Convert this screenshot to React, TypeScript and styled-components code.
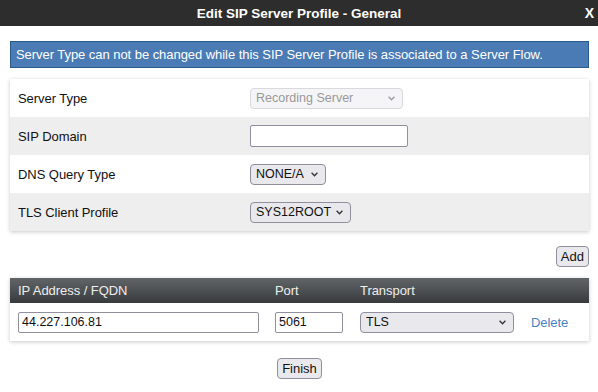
import styled, { createGlobalStyle } from "styled-components";

const GlobalStyle = createGlobalStyle`
  html, body {
    margin: 0;
    padding: 0;
    background: #ffffff;
    font-family: "Liberation Sans", Arial, sans-serif;
    font-size: 13px;
    color: #111;
  }
`;

const Dialog = styled.div`
  width: 598px;
  height: 392px;
  display: flex;
  flex-direction: column;
`;

const TitleBar = styled.div`
  height: 26px;
  background: #2d2d2d;
  display: grid;
  grid-template-columns: 1fr auto 1fr;
  align-items: center;
  color: #ffffff;
  font-weight: bold;
  font-size: 13.5px;
`;

const Title = styled.div`
  grid-column: 2;
`;

const Close = styled.div`
  justify-self: end;
  padding-right: 4px;
  font-size: 14px;
`;

const Body = styled.div`
  padding: 0 9px 0 10px;
  display: flex;
  flex-direction: column;
  letter-spacing: -0.05px;
`;

const Banner = styled.div`
  margin-top: 15px;
  height: 27px;
  box-sizing: border-box;
  border: 1px solid #2c5a8a;
  background: #4a7bb4;
  color: #ffffff;
  display: flex;
  align-items: center;
  padding-left: 5px;
`;

const Card = styled.div<{ $top: number }>`
  margin-top: ${({ $top }) => $top}px;
  background: #ffffff;
  box-shadow: 0 1px 4px rgba(0, 0, 0, 0.22);
`;

const FormRow = styled.div<{ $shade?: boolean }>`
  height: 38px;
  display: grid;
  grid-template-columns: 240px 1fr;
  align-items: center;
  background: ${({ $shade }) => ($shade ? "#eeeeee" : "#ffffff")};
`;

const Label = styled.div`
  padding-left: 8px;
`;

const SelectWrap = styled.span<{ $w: number }>`
  position: relative;
  display: inline-flex;
  width: ${({ $w }) => $w}px;
  height: 21px;
  vertical-align: middle;
`;

const Select = styled.select`
  appearance: none;
  width: 100%;
  height: 100%;
  box-sizing: border-box;
  margin: 0;
  padding: 0 10px 0 5px;
  border: 1px solid #8f8f9d;
  border-radius: 4px;
  background: #e9e9ed;
  font-family: "Liberation Sans", Arial, sans-serif;
  font-size: 12.5px;
  color: #111;
  &:disabled {
    color: #6d6d6d;
    background: #f2f2f4;
    border-color: #c8c8cf;
  }
`;

const Chevron = styled.svg<{ $muted?: boolean }>`
  position: absolute;
  right: 8px;
  top: 8px;
  width: 7px;
  height: 5px;
  pointer-events: none;
  stroke: ${({ $muted }) => ($muted ? "#9a9aa2" : "#333")};
  fill: none;
  stroke-width: 1.3;
`;

const TextInput = styled.input<{ $w: number; $h?: number }>`
  width: ${({ $w }) => $w}px;
  height: ${({ $h }) => $h ?? 22}px;
  box-sizing: border-box;
  margin: 0;
  border: 1px solid #8f8f9d;
  border-radius: 2px;
  font-family: "Liberation Sans", Arial, sans-serif;
  font-size: 12.5px;
  color: #111;
  padding: 1px 3px;
  vertical-align: middle;
`;

const ButtonRow = styled.div<{ $align: string; $top: number }>`
  display: flex;
  justify-content: ${({ $align }) => $align};
  margin-top: ${({ $top }) => $top}px;
`;

const Button = styled.button`
  height: 21px;
  padding: 0 4px;
  border: 1px solid #8f8f9d;
  border-radius: 4px;
  background: #e9e9ed;
  font-family: "Liberation Sans", Arial, sans-serif;
  font-size: 13px;
  color: #111;
`;

const Columns = styled.div`
  display: grid;
  grid-template-columns: 257px 85px 171px 1fr;
  align-items: center;
  padding-left: 8px;
`;

const HeaderRow = styled(Columns)`
  height: 25px;
  background: linear-gradient(#616568, #383b3e);
  color: #eeeeee;
`;

const DataRow = styled(Columns)`
  height: 38px;
`;

const DeleteLink = styled.a`
  color: #4a82c4;
  text-decoration: none;
  cursor: pointer;
`;

function Dropdown({ w, value, disabled }: { w: number; value: string; disabled?: boolean }) {
  return (
    <SelectWrap $w={w}>
      <Select disabled={disabled} defaultValue={value}>
        <option value={value}>{value}</option>
      </Select>
      <Chevron $muted={disabled} viewBox="0 0 7 5">
        <path d="M0.6 0.8 L3.5 3.8 L6.4 0.8" />
      </Chevron>
    </SelectWrap>
  );
}

export default function App() {
  return (
    <Dialog>
      <GlobalStyle />
      <TitleBar>
        <Title>Edit SIP Server Profile - General</Title>
        <Close>X</Close>
      </TitleBar>
      <Body>
        <Banner>
          Server Type can not be changed while this SIP Server Profile is associated to a Server Flow.
        </Banner>
        <Card $top={11}>
          <FormRow>
            <Label>Server Type</Label>
            <div>
              <Dropdown w={153} value="Recording Server" disabled />
            </div>
          </FormRow>
          <FormRow $shade>
            <Label>SIP Domain</Label>
            <div>
              <TextInput $w={158} defaultValue="" />
            </div>
          </FormRow>
          <FormRow>
            <Label>DNS Query Type</Label>
            <div>
              <Dropdown w={76} value="NONE/A" />
            </div>
          </FormRow>
          <FormRow $shade>
            <Label>TLS Client Profile</Label>
            <div>
              <Dropdown w={101} value="SYS12ROOT" />
            </div>
          </FormRow>
        </Card>
        <ButtonRow $align="flex-end" $top={15}>
          <Button>Add</Button>
        </ButtonRow>
        <Card $top={11}>
          <HeaderRow>
            <div>IP Address / FQDN</div>
            <div>Port</div>
            <div>Transport</div>
            <div />
          </HeaderRow>
          <DataRow>
            <div>
              <TextInput $w={241} $h={21} defaultValue="44.227.106.81" />
            </div>
            <div>
              <TextInput $w={68} $h={21} defaultValue="5061" />
            </div>
            <div>
              <Dropdown w={154} value="TLS" />
            </div>
            <DeleteLink>Delete</DeleteLink>
          </DataRow>
        </Card>
        <ButtonRow $align="center" $top={17}>
          <Button>Finish</Button>
        </ButtonRow>
      </Body>
    </Dialog>
  );
}
